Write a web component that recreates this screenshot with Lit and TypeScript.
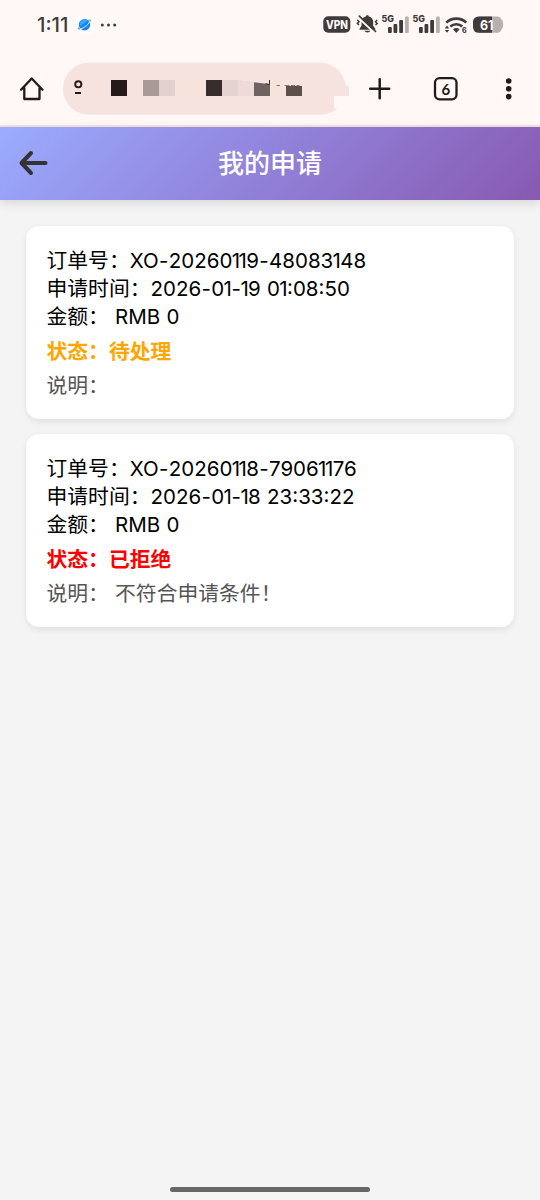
import { LitElement, html, css, svg } from 'lit';
import { customElement, property } from 'lit/decorators.js';

interface Application {
  orderNo: string;
  time: string;
  amount: string;
  state: 'pending' | 'rejected';
  note: string;
}

const STATE_TEXT = { pending: '待处理', rejected: '已拒绝' };

const applications: Application[] = [
  {
    orderNo: 'XO-20260119-48083148',
    time: '2026-01-19 01:08:50',
    amount: 'RMB 0',
    state: 'pending',
    note: '',
  },
  {
    orderNo: 'XO-20260118-79061176',
    time: '2026-01-18 23:33:22',
    amount: 'RMB 0',
    state: 'rejected',
    note: '不符合申请条件！',
  },
];

@customElement('status-bar')
export class StatusBar extends LitElement {
  static styles = css`
    :host {
      display: block;
      height: 50px;
    }
    svg {
      display: block;
    }
    text {
      font-family: Inter, 'Noto Sans', sans-serif;
      fill: #403b3b;
    }
    .clock {
      font-size: 19.5px;
      font-weight: 500;
    }
    .vpn {
      font-size: 11.5px;
      font-weight: 800;
      fill: #fff8f6;
    }
    .net {
      font-size: 9px;
      font-weight: 800;
    }
    .tiny {
      font-size: 7px;
      font-weight: 800;
    }
    .battery {
      font-size: 13px;
      font-weight: 700;
      fill: #fff8f6;
    }
  `;

  signal(x: number) {
    return svg`
      <g transform="translate(${x} 0)">
        <text class="net" x="0" y="22.3" textLength="12.5" lengthAdjust="spacingAndGlyphs">5G</text>
        <g fill="#403b3b">
          <rect x="6.5" y="27" width="3.8" height="6" rx="1" />
          <rect x="12" y="24" width="3.8" height="9" rx="1" />
          <rect x="17.7" y="20" width="3.8" height="13" rx="1" />
        </g>
        <rect x="23.5" y="16.5" width="3.8" height="16.5" rx="1" fill="#b8b0af" />
      </g>
    `;
  }

  render() {
    return html`
      <svg width="540" height="50" viewBox="0 0 540 50">
        <text class="clock" x="37" y="32" textLength="31.5" lengthAdjust="spacingAndGlyphs">1:11</text>

        <rect x="76" y="16.5" width="17" height="17" rx="5" fill="#fff" />
        <circle cx="84.5" cy="24.8" r="5.7" fill="#1683f5" />
        <path d="M80 22a5.7 5.7 0 0 1 8-1.6l-7.6 5.8z" fill="#35a7ff" />
        <path d="M79.5 29c2.8 0 8.5-3.6 10.3-7.5" fill="none" stroke="#fff" stroke-width="0.9" />
        <path d="M80 28.8c-1.5.6-2.2.2-1.5-1.2M88.3 20.3c1.6-.8 2.6-.4 1.8 1.2" fill="none" stroke="#1683f5" />

        <g fill="#403b3b">
          <circle cx="102.3" cy="25" r="1.5" />
          <circle cx="108.5" cy="25" r="1.5" />
          <circle cx="114.7" cy="25" r="1.5" />
        </g>

        <rect x="323.3" y="16.3" width="27" height="16.5" rx="5" fill="#403b3b" />
        <text class="vpn" x="326" y="28.9" textLength="22" lengthAdjust="spacingAndGlyphs">VPN</text>

        <path d="M367.3 15.3c-.9 0-1.4.5-1.5 1.2-2.8.7-4.3 2.8-4.3 5.7v3.5l-2 3v1h15.8v-1l-2.1-3v-3.5c0-2.9-1.5-5-4.3-5.7-.1-.7-.7-1.2-1.6-1.2z" fill="#403b3b" />
        <path d="M364.5 30.8h5.8c-.7 2.3-5 2.3-5.8 0z" fill="#403b3b" />
        <path d="M358.3 17.7l16.8 15.5" stroke="#fff8f6" stroke-width="2" />
        <path d="M359.3 16.2l16.3 15.3" stroke="#403b3b" stroke-width="1.7" stroke-linecap="round" />
        <path d="M357.3 20l1.7 1.7-1.7 1.7 1.7 1.6M377.2 20l-1.7 1.7 1.7 1.7-1.7 1.6" fill="none" stroke="#403b3b" stroke-width="1.5" />

        ${this.signal(381.5)} ${this.signal(412.5)}

        <g fill="none" stroke="#403b3b" stroke-width="2.7">
          <path d="M446.3 22.6c5.3-5.3 14.7-5.3 20 0" />
          <path d="M450.3 26.5c3.3-3 8.7-3 12 0" />
        </g>
        <path d="M453 29.3c1.9-1.6 4.7-1.6 6.6 0l-3.3 3.6z" fill="#403b3b" />
        <path d="M447 25.6l2.2 2.8h-4.4zM447 32.8l2.2-2.8h-4.4z" fill="#403b3b" />
        <text class="tiny" x="462" y="33">6</text>

        <path d="M479 16.5h18.5a4.5 4.5 0 0 1 4 3.3c2.3.5 2.3 8.9 0 9.4a4.5 4.5 0 0 1-4 3.6H479z" fill="#b8b0af" />
        <path d="M478.5 16.5H492v16.3h-13.5a5.5 5.5 0 0 1-5.5-5.5V22a5.5 5.5 0 0 1 5.5-5.5z" fill="#403b3b" />
        <text class="battery" x="480" y="29.5" textLength="13.5" lengthAdjust="spacingAndGlyphs">61</text>
      </svg>
    `;
  }
}

@customElement('browser-bar')
export class BrowserBar extends LitElement {
  static styles = css`
    :host {
      display: block;
      height: 75px;
      border-bottom: 2px solid #f5e3df;
    }
    svg {
      display: block;
    }
    .count {
      font: 700 15px Lato, sans-serif;
      fill: #231a19;
    }
  `;

  render() {
    return html`
      <svg width="540" height="75" viewBox="0 50 540 75">
        <path
          d="M21 89.7L31.7 78.5 42.5 89.7M24.3 88v11h15.2V88"
          fill="none"
          stroke="#231a19"
          stroke-width="2.3"
          stroke-linejoin="round"
          stroke-linecap="round"
        />

        <rect x="63" y="62.5" width="283" height="52.3" rx="26.1" fill="#f6e3e0" />
        <rect x="334" y="86" width="15" height="10" fill="#f6e3e0" />
        <rect x="334" y="96" width="15" height="12" fill="#fff8f6" />

        <circle cx="78.3" cy="84.3" r="3.1" fill="none" stroke="#231a19" stroke-width="1.9" />
        <rect x="75" y="92" width="6" height="2" fill="#231a19" />

        <!-- masked address -->
        <g shape-rendering="crispEdges">
          <rect x="111" y="80" width="16" height="16" fill="#231a19" />
          <rect x="143" y="80" width="16" height="16" fill="#a89a97" />
          <rect x="159" y="80" width="16" height="16" fill="#e1d0cd" />
          <rect x="175" y="78" width="31" height="18" fill="#f6e3dc" />
          <rect x="206" y="80" width="16" height="16" fill="#382d2b" />
          <rect x="222" y="80" width="16" height="16" fill="#e5d3d1" />
          <path d="M238 80l16 2v14h-16z" fill="#eedbd9" />
          <rect x="270" y="82" width="16" height="14" fill="#f6e3dc" />
          <rect x="286" y="86" width="16" height="10" fill="#5e4f4c" />
        </g>
        <path d="M254 82.3l16 2V96h-16z" fill="#70625f" />
        <path d="M269.5 80v4.5l-4-.8" fill="none" stroke="#382d2b" stroke-width="1" />
        <path d="M276.5 85.5h3.5M284.5 85.5h5M291 85.5h4M296.5 85.5h3" stroke="#877976" stroke-width="1" />

        <path d="M379.7 79.3v19M370.2 88.8h19" stroke="#231a19" stroke-width="2.5" stroke-linecap="round" />

        <rect x="435" y="78.1" width="21.5" height="21.3" rx="4.6" fill="none" stroke="#231a19" stroke-width="2.3" />
        <text class="count" x="445.8" y="94.5" text-anchor="middle">6</text>

        <g fill="#231a19">
          <circle cx="508.7" cy="81" r="2.8" />
          <circle cx="508.7" cy="88.8" r="2.8" />
          <circle cx="508.7" cy="96.6" r="2.8" />
        </g>
      </svg>
    `;
  }
}

@customElement('application-card')
export class ApplicationCard extends LitElement {
  @property({ attribute: false }) item!: Application;

  static styles = css`
    :host {
      display: block;
      box-sizing: border-box;
      height: 192.5px;
      padding: 19px 20.5px;
      border-radius: 13px;
      background: #fff;
      box-shadow: 0 2.6px 6.5px rgba(0, 0, 0, 0.08);
      font-family: 'Noto Sans CJK SC', sans-serif;
      font-size: 20.8px;
      line-height: 28px;
      color: #000;
    }
    .row {
      height: 28px;
      white-space: pre;
      word-spacing: 1.5px;
    }
    .value {
      font-family: Inter, 'Noto Sans CJK SC', sans-serif;
      font-size: 20.5px;
      word-spacing: 0.5px;
    }
    .one {
      margin: 0 -0.7px;
    }
    .dash {
      margin: 0 0.3px;
    }
    .status {
      margin: 6.5px 0;
      font-weight: 700;
    }
    .pending {
      color: #ffa500;
    }
    .rejected {
      color: #f00;
    }
    .note {
      color: #555;
    }
  `;

  // the digit 1 is set tighter than the other figures, dashes a little looser
  figure(c: string) {
    if (c === '1') return html`<span class="one">1</span>`;
    if (c === '-') return html`<span class="dash">-</span>`;
    return c;
  }

  figures(text: string) {
    return html`<span class="value">${text.split('').map((c) => this.figure(c))}</span>`;
  }

  render() {
    const { orderNo, time, amount, state, note } = this.item;
    return html`
      <div class="row">订单号：${this.figures(orderNo)}</div>
      <div class="row">申请时间：${this.figures(time)}</div>
      <div class="row">金额： ${this.figures(amount)}</div>
      <div class="row status ${state}">状态：${STATE_TEXT[state]}</div>
      <div class="row note">说明： ${note}</div>
    `;
  }
}

@customElement('app-root')
export class AppRoot extends LitElement {
  static styles = css`
    :host {
      display: flex;
      flex-direction: column;
      height: 1200px;
      overflow: hidden;
      background: #f4f4f4;
    }
    .chrome {
      background: #fff8f6;
    }
    .header {
      display: grid;
      grid-template-columns: 66px 1fr 66px;
      align-items: center;
      box-sizing: border-box;
      height: 73px;
      padding-bottom: 2px;
      background: linear-gradient(135deg, #9bacff 0%, #9181d9 50%, #8859b1 100%);
      box-shadow: 0 2.6px 10px rgba(0, 0, 0, 0.12);
    }
    .back {
      display: block;
      margin-left: 18px;
    }
    .title {
      margin: 0;
      padding-bottom: 2px;
      font: 500 26px/36px 'Noto Sans CJK SC', sans-serif;
      text-align: center;
      color: #fff;
    }
    .list {
      flex: 1;
      display: flex;
      flex-direction: column;
      gap: 15.7px;
      padding: 26px;
    }
    .gesture {
      align-self: center;
      width: 200px;
      height: 5px;
      margin-bottom: 8px;
      border-radius: 3px;
      background: #676767;
    }
  `;

  render() {
    return html`
      <div class="chrome">
        <status-bar></status-bar>
        <browser-bar></browser-bar>
      </div>
      <div class="header">
        <svg class="back" width="32" height="28" viewBox="0 0 32 28">
          <path
            d="M13 4L3.5 14l9.5 10M4 14h23.5"
            fill="none"
            stroke="#333"
            stroke-width="4"
            stroke-linecap="round"
            stroke-linejoin="round"
          />
        </svg>
        <h1 class="title">我的申请</h1>
      </div>
      <div class="list">
        ${applications.map((item) => html`<application-card .item=${item}></application-card>`)}
      </div>
      <div class="gesture"></div>
    `;
  }
}
